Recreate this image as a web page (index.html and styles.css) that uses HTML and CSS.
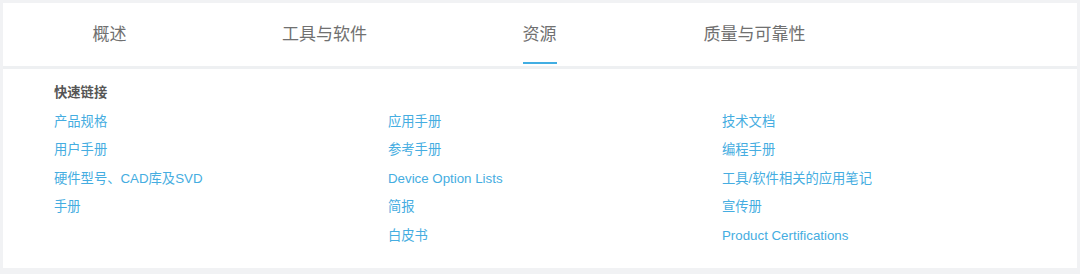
FILE: index.html
```html
<!DOCTYPE html>
<html lang="zh-CN">
<head>
    <meta charset="UTF-8">
    <title>资源</title>
    <link rel="stylesheet" href="styles.css">
</head>
<body>
    <div class="page">
        <nav class="tabs">
            <a class="tab">概述</a>
            <a class="tab">工具与软件</a>
            <a class="tab active">资源</a>
            <a class="tab">质量与可靠性</a>
        </nav>
        <div class="panel">
            <div class="heading">快速链接</div>
            <div class="links">
                <div class="col">
                    <a>产品规格</a>
                    <a>用户手册</a>
                    <a>硬件型号、CAD库及SVD</a>
                    <a>手册</a>
                </div>
                <div class="col">
                    <a>应用手册</a>
                    <a>参考手册</a>
                    <a>Device Option Lists</a>
                    <a>简报</a>
                    <a>白皮书</a>
                </div>
                <div class="col">
                    <a>技术文档</a>
                    <a>编程手册</a>
                    <a>工具/软件相关的应用笔记</a>
                    <a>宣传册</a>
                    <a>Product Certifications</a>
                </div>
            </div>
        </div>
    </div>
</body>
</html>
```

FILE: styles.css
```css
body {
    margin: 0;
    background: #f1f2f4;
    font-family: "Liberation Sans", "Noto Sans CJK SC", sans-serif;
}
.page {
    padding: 3px 3px 5px 3px;
}
.tabs {
    display: flex;
    height: 63px;
    background: #fff;
    border-bottom: 3px solid #eef0f2;
}
.tab {
    width: 215px;
    box-sizing: border-box;
    display: flex;
    justify-content: center;
    align-items: center;
    font-size: 17px;
    color: #707070;
    padding-bottom: 4px;
    position: relative;
}
.tab:first-child {
    margin-left: -1px;
}
.tab.active::after {
    content: "";
    position: absolute;
    left: 50%;
    bottom: 2px;
    width: 34px;
    margin-left: -17px;
    height: 2px;
    background: #41aee3;
}
.panel {
    background: #fff;
    height: 199px;
    padding: 10px 0 0 51px;
    box-sizing: border-box;
    font-size: 13.3px;
    line-height: 28.5px;
}
.heading {
    font-weight: bold;
    color: #555;
}
.links {
    display: flex;
}
.col {
    width: 334px;
    display: flex;
    flex-direction: column;
}
.col a {
    color: #45ade1;
}
```
